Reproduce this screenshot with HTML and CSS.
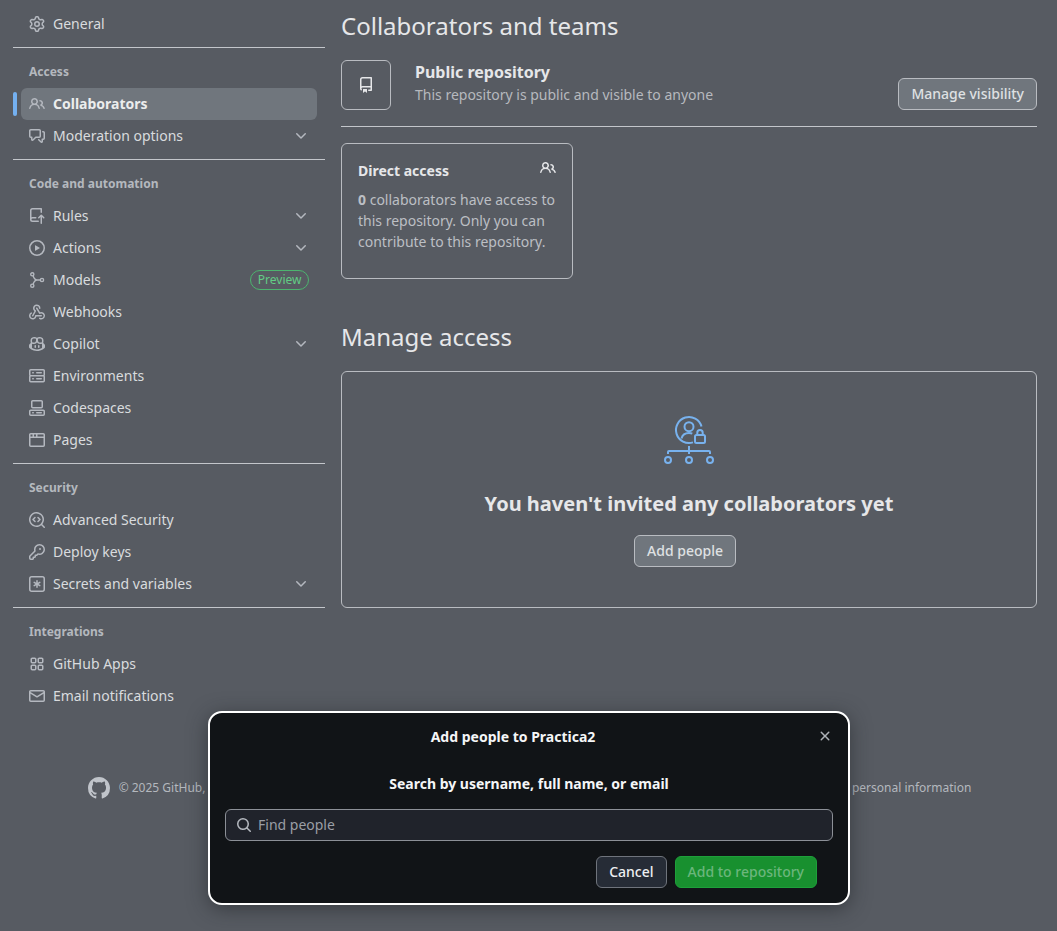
FILE: index.html
```html
<!DOCTYPE html>
<html lang="en">
<head>
<meta charset="utf-8">
<title>Collaborators and teams</title>
<link rel="stylesheet" href="styles.css">
</head>
<body>
<svg class="sprite" xmlns="http://www.w3.org/2000/svg">
<symbol id="gear" viewBox="0 0 16 16"><path d="M8 0a8.2 8.2 0 0 1 .701.031C9.444.095 9.99.645 10.16 1.29l.288 1.107c.018.066.079.158.212.224.231.114.454.243.668.386.123.082.233.09.299.071l1.103-.303c.644-.176 1.392.021 1.82.63.27.385.506.792.704 1.218.315.675.111 1.422-.364 1.891l-.814.806c-.049.048-.098.147-.088.294.016.257.016.515 0 .772-.01.147.038.246.088.294l.814.806c.475.469.679 1.216.364 1.891a7.977 7.977 0 0 1-.704 1.217c-.428.61-1.176.807-1.82.63l-1.102-.302c-.067-.019-.177-.011-.3.071a5.909 5.909 0 0 1-.668.386c-.133.066-.194.158-.211.224l-.29 1.106c-.168.646-.715 1.196-1.458 1.26a8.006 8.006 0 0 1-1.402 0c-.743-.064-1.289-.614-1.458-1.26l-.289-1.106c-.018-.066-.079-.158-.212-.224a5.738 5.738 0 0 1-.668-.386c-.123-.082-.233-.09-.299-.071l-1.103.303c-.644.176-1.392-.021-1.82-.63a8.12 8.12 0 0 1-.704-1.218c-.315-.675-.111-1.422.363-1.891l.815-.806c.05-.048.098-.147.088-.294a6.214 6.214 0 0 1 0-.772c.01-.147-.038-.246-.088-.294l-.815-.806C.635 6.045.431 5.298.746 4.623a7.92 7.92 0 0 1 .704-1.217c.428-.61 1.176-.807 1.82-.63l1.102.302c.067.019.177.011.3-.071.214-.143.437-.272.668-.386.133-.066.194-.158.211-.224l.29-1.106C6.009.645 6.556.095 7.299.03 7.53.01 7.764 0 8 0Zm-.571 1.525c-.036.003-.108.036-.137.146l-.289 1.105c-.147.561-.549.967-.998 1.189-.173.086-.34.183-.5.29-.417.278-.97.423-1.529.27l-1.103-.303c-.109-.03-.175.016-.195.045-.22.312-.412.644-.573.99-.014.031-.021.11.059.19l.815.806c.411.406.562.957.53 1.456a4.709 4.709 0 0 0 0 .582c.032.499-.119 1.05-.53 1.456l-.815.806c-.081.08-.073.159-.059.19.162.346.353.677.573.989.02.03.085.076.195.046l1.102-.303c.56-.153 1.113-.008 1.53.27.161.107.328.204.501.29.447.222.85.629.997 1.189l.289 1.105c.029.109.101.143.137.146a6.6 6.6 0 0 0 1.142 0c.036-.003.108-.036.137-.146l.289-1.105c.147-.561.549-.967.998-1.189.173-.086.34-.183.5-.29.417-.278.97-.423 1.529-.27l1.103.303c.109.029.175-.016.195-.045.22-.313.411-.644.573-.99.014-.031.021-.11-.059-.19l-.815-.806c-.411-.406-.562-.957-.53-1.456a4.709 4.709 0 0 0 0-.582c-.032-.499.119-1.05.53-1.456l.815-.806c.081-.08.073-.159.059-.19a6.464 6.464 0 0 0-.573-.989c-.02-.03-.085-.076-.195-.046l-1.102.303c-.56.153-1.113.008-1.53-.27a4.44 4.44 0 0 0-.501-.29c-.447-.222-.85-.629-.997-1.189l-.289-1.105c-.029-.11-.101-.143-.137-.146a6.6 6.6 0 0 0-1.142 0ZM11 8a3 3 0 1 1-6 0 3 3 0 0 1 6 0ZM9.5 8a1.5 1.5 0 1 0-3.001.001A1.5 1.5 0 0 0 9.5 8Z"/></symbol>
<symbol id="people" viewBox="0 0 16 16"><path d="M2 5.5a3.5 3.5 0 1 1 5.898 2.549 5.508 5.508 0 0 1 3.034 4.084.75.75 0 1 1-1.482.235 4 4 0 0 0-7.9 0 .75.75 0 0 1-1.482-.236A5.507 5.507 0 0 1 3.102 8.05 3.493 3.493 0 0 1 2 5.5ZM11 4a3.001 3.001 0 0 1 2.22 5.018 5.01 5.01 0 0 1 2.56 3.012.749.749 0 0 1-.885.954.752.752 0 0 1-.549-.514 3.507 3.507 0 0 0-2.522-2.372.75.75 0 0 1-.574-.73v-.352a.75.75 0 0 1 .416-.672A1.5 1.5 0 0 0 11 5.5.75.75 0 0 1 11 4Zm-5.5-.5a2 2 0 1 0-.001 3.999A2 2 0 0 0 5.5 3.5Z"/></symbol>
<symbol id="comment" viewBox="0 0 16 16"><path d="M1.75 1h8.5c.966 0 1.75.784 1.75 1.75v5.5A1.75 1.75 0 0 1 10.25 10H7.061l-2.574 2.573A1.458 1.458 0 0 1 2 11.543V10h-.25A1.75 1.75 0 0 1 0 8.25v-5.5C0 1.784.784 1 1.75 1ZM1.5 2.75v5.5c0 .138.112.25.25.25h1a.75.75 0 0 1 .75.75v2.19l2.72-2.72a.749.749 0 0 1 .53-.22h3.5a.25.25 0 0 0 .25-.25v-5.5a.25.25 0 0 0-.25-.25h-8.5a.25.25 0 0 0-.25.25Zm13 2a.25.25 0 0 0-.25-.25h-.5a.75.75 0 0 1 0-1.5h.5c.966 0 1.75.784 1.75 1.75v5.5A1.75 1.75 0 0 1 14.25 12H14v1.543a1.458 1.458 0 0 1-2.487 1.03L9.22 12.28a.749.749 0 0 1 .326-1.275.749.749 0 0 1 .734.215l2.22 2.22v-2.19a.75.75 0 0 1 .75-.75h1a.25.25 0 0 0 .25-.25Z"/></symbol>
<symbol id="repopush" viewBox="0 0 16 16"><path d="M1 2.5A2.5 2.5 0 0 1 3.5 0h8.75a.75.75 0 0 1 .75.75v3.5a.75.75 0 0 1-1.5 0V1.5h-8a1 1 0 0 0-1 1v6.708A2.493 2.493 0 0 1 3.5 9h3.25a.75.75 0 0 1 0 1.5H3.5a1 1 0 0 0 0 2h5.75a.75.75 0 0 1 0 1.5H3.5A2.5 2.5 0 0 1 1 11.5Zm13.23 7.79h-.001l-1.224-1.224v6.184a.75.75 0 0 1-1.5 0V9.066L10.28 10.29a.75.75 0 0 1-1.06-1.061l2.505-2.504a.75.75 0 0 1 1.06 0L15.29 9.23a.751.751 0 0 1-.018 1.042.751.751 0 0 1-1.042.018Z"/></symbol>
<symbol id="play" viewBox="0 0 16 16"><path d="M8 0a8 8 0 1 1 0 16A8 8 0 0 1 8 0ZM1.5 8a6.5 6.5 0 1 0 13 0 6.5 6.5 0 0 0-13 0Zm4.879-2.773 4.264 2.559a.25.25 0 0 1 0 .428l-4.264 2.559A.25.25 0 0 1 6 10.559V5.442a.25.25 0 0 1 .379-.215Z"/></symbol>
<symbol id="model" viewBox="0 0 16 16"><g fill="none" stroke="currentColor" stroke-width="1.4"><circle cx="3.3" cy="2.3" r="1.6"/><circle cx="3.3" cy="13.7" r="1.6"/><circle cx="13" cy="8" r="1.6"/><path d="M11.4 8H8C6.400 8 5 6.500 4.100 3.800M8 8C6.400 8 5 9.500 4.100 12.200"/></g></symbol>
<symbol id="webhook" viewBox="0 0 16 16"><path d="M5.5 4.25a2.25 2.25 0 0 1 4.5 0 .75.75 0 0 0 1.5 0 3.75 3.75 0 1 0-6.14 2.889l-2.272 4.258a.75.75 0 0 0 1.324.706L7 7.25a.75.75 0 0 0-.309-1.016A2.25 2.25 0 0 1 5.5 4.25Z"/><path d="M7.364 3.607a.75.75 0 0 1 1.03.257l2.608 4.349a3.75 3.75 0 1 1-.628 6.785.75.75 0 0 1 .752-1.299 2.25 2.25 0 1 0-.033-3.88.75.75 0 0 1-1.03-.256L7.107 4.636a.75.75 0 0 1 .257-1.03Z"/><path d="M2.9 8.776A.75.75 0 0 1 2.625 9.8 2.25 2.25 0 1 0 6 11.75a.75.75 0 0 1 .75-.751h5.5a.75.75 0 0 1 0 1.5H7.425a3.751 3.751 0 1 1-5.55-3.998.75.75 0 0 1 1.024.274Z"/></symbol>
<symbol id="copilot" viewBox="0 0 16 16"><path d="M7.998 15.035c-4.562 0-7.873-2.914-7.998-3.749V9.338c.085-.628.677-1.686 1.588-2.065.013-.07.024-.143.036-.218.029-.183.06-.384.126-.612-.201-.508-.254-1.084-.254-1.656 0-.87.128-1.769.693-2.484.579-.733 1.494-1.124 2.724-1.261 1.206-.134 2.262.034 2.944.765.05.053.096.108.139.165.044-.057.094-.112.143-.165.682-.731 1.738-.899 2.944-.765 1.23.137 2.145.528 2.724 1.261.566.715.693 1.614.693 2.484 0 .572-.053 1.148-.254 1.656.066.228.098.429.126.612.012.076.024.148.037.218.924.385 1.522 1.471 1.591 2.095v1.872c0 .766-3.351 3.795-8.002 3.795Zm0-1.485c2.28 0 4.584-1.11 5.002-1.433V7.862l-.023-.116c-.49.21-1.075.291-1.727.291-1.146 0-2.059-.327-2.71-.991A3.222 3.222 0 0 1 8 6.303a3.24 3.24 0 0 1-.544.743c-.65.664-1.563.991-2.71.991-.652 0-1.236-.081-1.727-.291l-.023.116v4.255c.419.323 2.722 1.433 5.002 1.433ZM6.762 2.83c-.193-.206-.637-.413-1.682-.297-1.019.113-1.479.404-1.713.7-.247.312-.369.789-.369 1.554 0 .793.129 1.171.308 1.371.162.181.519.379 1.442.379.853 0 1.339-.235 1.638-.54.315-.322.527-.827.617-1.553.117-.935-.037-1.395-.241-1.614Zm4.155-.297c-1.044-.116-1.488.091-1.681.297-.204.219-.359.679-.242 1.614.091.726.303 1.231.618 1.553.299.305.784.54 1.638.54.922 0 1.28-.198 1.442-.379.179-.2.308-.578.308-1.371 0-.765-.123-1.242-.37-1.554-.233-.296-.693-.587-1.713-.7Z"/><path d="M6.25 9.037a.75.75 0 0 1 .75.75v1.501a.75.75 0 0 1-1.5 0V9.787a.75.75 0 0 1 .75-.75Zm4.25.75v1.501a.75.75 0 0 1-1.5 0V9.787a.75.75 0 0 1 1.5 0Z"/></symbol>
<symbol id="server" viewBox="0 0 16 16"><path d="M1.75 1h12.5c.966 0 1.75.784 1.75 1.75v4c0 .372-.116.717-.314 1 .198.283.314.628.314 1v4a1.75 1.75 0 0 1-1.75 1.75H1.75A1.75 1.75 0 0 1 0 12.75v-4c0-.358.109-.707.314-1a1.739 1.739 0 0 1-.314-1v-4C0 1.784.784 1 1.75 1ZM1.5 2.75v4c0 .138.112.25.25.25h12.5a.25.25 0 0 0 .25-.25v-4a.25.25 0 0 0-.25-.25H1.75a.25.25 0 0 0-.25.25Zm.25 5.75a.25.25 0 0 0-.25.25v4c0 .138.112.25.25.25h12.5a.25.25 0 0 0 .25-.25v-4a.25.25 0 0 0-.25-.25ZM7 4.75A.75.75 0 0 1 7.75 4h4.5a.75.75 0 0 1 0 1.5h-4.5A.75.75 0 0 1 7 4.75ZM7.75 10h4.5a.75.75 0 0 1 0 1.5h-4.5a.75.75 0 0 1 0-1.5ZM3 4.75A.75.75 0 0 1 3.75 4h.5a.75.75 0 0 1 0 1.5h-.5A.75.75 0 0 1 3 4.75ZM3.75 10h.5a.75.75 0 0 1 0 1.5h-.5a.75.75 0 0 1 0-1.5Z"/></symbol>
<symbol id="codespaces" viewBox="0 0 16 16"><path d="M0 11.25c0-.966.784-1.75 1.75-1.75h12.5c.966 0 1.75.784 1.75 1.75v3A1.75 1.75 0 0 1 14.25 16H1.75A1.75 1.75 0 0 1 0 14.25Zm2-9.5C2 .784 2.784 0 3.75 0h8.5C13.216 0 14 .784 14 1.75v5a1.75 1.75 0 0 1-1.75 1.75h-8.5A1.75 1.75 0 0 1 2 6.75Zm1.75-.25a.25.25 0 0 0-.25.25v5c0 .138.112.25.25.25h8.5a.25.25 0 0 0 .25-.25v-5a.25.25 0 0 0-.25-.25Zm-2 9.5a.25.25 0 0 0-.25.25v3c0 .138.112.25.25.25h12.5a.25.25 0 0 0 .25-.25v-3a.25.25 0 0 0-.25-.25Z"/><path d="M7 12.75a.75.75 0 0 1 .75-.75h4.5a.75.75 0 0 1 0 1.5h-4.5a.75.75 0 0 1-.75-.75Zm-4 0a.75.75 0 0 1 .75-.75h.5a.75.75 0 0 1 0 1.5h-.5a.75.75 0 0 1-.75-.75Z"/></symbol>
<symbol id="browser" viewBox="0 0 16 16"><path d="M0 2.75C0 1.784.784 1 1.75 1h12.5c.966 0 1.75.784 1.75 1.75v10.5A1.75 1.75 0 0 1 14.25 15H1.75A1.75 1.75 0 0 1 0 13.25ZM14.5 6h-13v7.25c0 .138.112.25.25.25h12.5a.25.25 0 0 0 .25-.25Zm-6-3.5v2h6V2.75a.25.25 0 0 0-.25-.25ZM5 2.5v2h2v-2Zm-3.25 0a.25.25 0 0 0-.25.25V4.5h2v-2Z"/></symbol>
<symbol id="codescan" viewBox="0 0 16 16"><path d="M8.47 4.97a.75.75 0 0 0 0 1.06L9.94 7.5 8.47 8.97a.75.75 0 1 0 1.06 1.06l2-2a.75.75 0 0 0 0-1.06l-2-2a.75.75 0 0 0-1.06 0ZM6.53 6.03a.75.75 0 0 0-1.06-1.06l-2 2a.75.75 0 0 0 0 1.06l2 2a.75.75 0 1 0 1.06-1.06L5.06 7.5l1.47-1.47Z"/><path d="M12.246 13.307a7.501 7.501 0 1 1 1.06-1.06l2.474 2.473a.749.749 0 0 1-.326 1.275.749.749 0 0 1-.734-.215ZM1.5 7.5a6.002 6.002 0 0 0 3.608 5.504 6.002 6.002 0 0 0 6.486-1.117.748.748 0 0 1 .292-.293A6 6 0 1 0 1.5 7.5Z"/></symbol>
<symbol id="key" viewBox="0 0 16 16"><path d="M10.5 0a5.499 5.499 0 1 1-1.288 10.848l-.932.932a.749.749 0 0 1-.53.22H7v.75a.749.749 0 0 1-.22.53l-.5.5a.749.749 0 0 1-.53.22H5v.75a.749.749 0 0 1-.22.53l-.5.5a.749.749 0 0 1-.53.22h-2A1.75 1.75 0 0 1 0 14.25v-2c0-.199.079-.389.22-.53l4.932-4.932A5.5 5.5 0 0 1 10.5 0Zm-4 5.5c-.001.431.069.86.205 1.269a.75.75 0 0 1-.181.768L1.5 12.56v1.69c0 .138.112.25.25.25h1.69l.06-.06v-1.19a.75.75 0 0 1 .75-.75h1.19l.06-.06v-1.19a.75.75 0 0 1 .75-.75h1.19l1.023-1.025a.75.75 0 0 1 .768-.18A4 4 0 1 0 6.5 5.5ZM11 6a1 1 0 1 1 0-2 1 1 0 0 1 0 2Z"/></symbol>
<symbol id="asterisk" viewBox="0 0 16 16"><path d="M0 2.75A2.75 2.75 0 0 1 2.75 0h10.5A2.75 2.75 0 0 1 16 2.75v10.5A2.75 2.75 0 0 1 13.25 16H2.75A2.75 2.75 0 0 1 0 13.25ZM2.75 1.5c-.69 0-1.25.56-1.25 1.25v10.5c0 .69.56 1.25 1.25 1.25h10.5c.69 0 1.25-.56 1.25-1.25V2.75c0-.69-.56-1.25-1.25-1.25Z"/><path d="M8 4a.75.75 0 0 1 .75.75V6.7l1.69-.975a.75.75 0 0 1 .75 1.3L9.5 8l1.69.976a.75.75 0 0 1-.75 1.298L8.75 9.3v1.951a.75.75 0 0 1-1.5 0V9.299l-1.69.976a.75.75 0 0 1-.75-1.3L6.5 8l-1.69-.975a.75.75 0 0 1 .75-1.3l1.69.976V4.75A.75.75 0 0 1 8 4Z"/></symbol>
<symbol id="apps" viewBox="0 0 16 16"><path d="M1.5 3.25c0-.966.784-1.75 1.75-1.75h2.5c.966 0 1.75.784 1.75 1.75v2.5A1.75 1.75 0 0 1 5.75 7.5h-2.5A1.75 1.75 0 0 1 1.5 5.75Zm7 0c0-.966.784-1.75 1.75-1.75h2.5c.966 0 1.75.784 1.75 1.75v2.5a1.75 1.75 0 0 1-1.75 1.75h-2.5A1.75 1.75 0 0 1 8.5 5.75Zm-7 7c0-.966.784-1.75 1.75-1.75h2.5c.966 0 1.75.784 1.75 1.75v2.5a1.75 1.75 0 0 1-1.75 1.75h-2.5a1.75 1.75 0 0 1-1.75-1.75Zm7 0c0-.966.784-1.75 1.75-1.75h2.5c.966 0 1.75.784 1.75 1.75v2.5a1.75 1.75 0 0 1-1.75 1.75h-2.5a1.75 1.75 0 0 1-1.75-1.75ZM3.25 3a.25.25 0 0 0-.25.25v2.5c0 .138.112.25.25.25h2.5A.25.25 0 0 0 6 5.75v-2.5A.25.25 0 0 0 5.75 3Zm7 0a.25.25 0 0 0-.25.25v2.5c0 .138.112.25.25.25h2.5a.25.25 0 0 0 .25-.25v-2.5a.25.25 0 0 0-.25-.25Zm-7 7a.25.25 0 0 0-.25.25v2.5c0 .138.112.25.25.25h2.5a.25.25 0 0 0 .25-.25v-2.5a.25.25 0 0 0-.25-.25Zm7 0a.25.25 0 0 0-.25.25v2.5c0 .138.112.25.25.25h2.5a.25.25 0 0 0 .25-.25v-2.5a.25.25 0 0 0-.25-.25Z"/></symbol>
<symbol id="mail" viewBox="0 0 16 16"><path d="M1.75 2h12.5c.966 0 1.75.784 1.75 1.75v8.5A1.75 1.75 0 0 1 14.25 14H1.75A1.75 1.75 0 0 1 0 12.25v-8.5C0 2.784.784 2 1.75 2ZM1.5 12.251c0 .138.112.25.25.25h12.5a.25.25 0 0 0 .25-.25V5.809L8.38 9.397a.75.75 0 0 1-.76 0L1.5 5.809v6.442Zm13-8.181v-.32a.25.25 0 0 0-.25-.25H1.75a.25.25 0 0 0-.25.25v.32L8 7.88Z"/></symbol>
<symbol id="chevron" viewBox="0 0 16 16"><path d="M12.78 5.22a.749.749 0 0 1 0 1.06l-4.25 4.25a.749.749 0 0 1-1.06 0L3.22 6.28a.749.749 0 1 1 1.06-1.06L8 8.939l3.72-3.719a.749.749 0 0 1 1.06 0Z"/></symbol>
<symbol id="repo" viewBox="0 0 16 16"><path d="M2 2.5A2.5 2.5 0 0 1 4.5 0h8.75a.75.75 0 0 1 .75.75v12.5a.75.75 0 0 1-.75.75h-2.5a.75.75 0 0 1 0-1.5h1.75v-2h-8a1 1 0 0 0-.714 1.7.75.75 0 1 1-1.072 1.05A2.495 2.495 0 0 1 2 11.5Zm10.5-1h-8a1 1 0 0 0-1 1v6.708A2.486 2.486 0 0 1 4.5 9h8ZM5 12.25a.25.25 0 0 1 .25-.25h3.5a.25.25 0 0 1 .25.25v3.25a.25.25 0 0 1-.4.2l-1.45-1.087a.249.249 0 0 0-.3 0L5.4 15.7a.25.25 0 0 1-.4-.2Z"/></symbol>
<symbol id="close" viewBox="0 0 16 16"><path d="M3.72 3.72a.75.75 0 0 1 1.06 0L8 6.94l3.22-3.22a.749.749 0 0 1 1.275.326.749.749 0 0 1-.215.734L9.06 8l3.22 3.22a.749.749 0 0 1-.326 1.275.749.749 0 0 1-.734-.215L8 9.06l-3.22 3.22a.751.751 0 0 1-1.042-.018.751.751 0 0 1-.018-1.042L6.94 8 3.72 4.78a.75.75 0 0 1 0-1.06Z"/></symbol>
<symbol id="search" viewBox="0 0 16 16"><path d="M10.68 11.74a6 6 0 0 1-7.922-8.982 6 6 0 0 1 8.982 7.922l3.04 3.04a.749.749 0 0 1-.326 1.275.749.749 0 0 1-.734-.215ZM11.5 7a4.499 4.499 0 1 0-8.997 0A4.499 4.499 0 0 0 11.5 7Z"/></symbol>
<symbol id="github" viewBox="0 0 16 16"><path d="M8 0c4.42 0 8 3.58 8 8a8.013 8.013 0 0 1-5.45 7.59c-.4.08-.55-.17-.55-.38 0-.27.01-1.13.01-2.2 0-.75-.25-1.23-.54-1.48 1.78-.2 3.65-.88 3.65-3.95 0-.88-.31-1.59-.82-2.15.08-.2.36-1.02-.08-2.12 0 0-.67-.22-2.2.82-.64-.18-1.32-.27-2-.27-.68 0-1.36.09-2 .27-1.53-1.03-2.2-.82-2.2-.82-.44 1.1-.16 1.92-.08 2.12-.51.56-.82 1.28-.82 2.15 0 3.06 1.86 3.75 3.64 3.95-.23.2-.44.55-.51 1.07-.46.21-1.61.55-2.33-.66-.15-.24-.6-.83-1.23-.82-.67.01-.27.38.01.53.34.19.73.9.82 1.13.16.45.68 1.31 2.69.94 0 .67.01 1.3.01 1.49 0 .21-.15.45-.55.38A7.995 7.995 0 0 1 0 8c0-4.42 3.58-8 8-8Z"/></symbol>
</svg>

<div class="page">
  <nav class="sidebar">
    <ul class="group">
      <li class="row"><svg class="ico"><use href="#gear"/></svg><span class="row-label">General</span></li>
    </ul>
    <h3 class="group-title">Access</h3>
    <ul class="group">
      <li class="row row-active"><svg class="ico"><use href="#people"/></svg><span class="row-label">Collaborators</span></li>
      <li class="row"><svg class="ico"><use href="#comment"/></svg><span class="row-label">Moderation options</span><svg class="ico"><use href="#chevron"/></svg></li>
    </ul>
    <h3 class="group-title">Code and automation</h3>
    <ul class="group">
      <li class="row"><svg class="ico"><use href="#repopush"/></svg><span class="row-label">Rules</span><svg class="ico"><use href="#chevron"/></svg></li>
      <li class="row"><svg class="ico"><use href="#play"/></svg><span class="row-label">Actions</span><svg class="ico"><use href="#chevron"/></svg></li>
      <li class="row"><svg class="ico"><use href="#model"/></svg><span class="row-label">Models</span><span class="pill">Preview</span></li>
      <li class="row"><svg class="ico"><use href="#webhook"/></svg><span class="row-label">Webhooks</span></li>
      <li class="row"><svg class="ico"><use href="#copilot"/></svg><span class="row-label">Copilot</span><svg class="ico"><use href="#chevron"/></svg></li>
      <li class="row"><svg class="ico"><use href="#server"/></svg><span class="row-label">Environments</span></li>
      <li class="row"><svg class="ico"><use href="#codespaces"/></svg><span class="row-label">Codespaces</span></li>
      <li class="row"><svg class="ico"><use href="#browser"/></svg><span class="row-label">Pages</span></li>
    </ul>
    <h3 class="group-title">Security</h3>
    <ul class="group">
      <li class="row"><svg class="ico"><use href="#codescan"/></svg><span class="row-label">Advanced Security</span></li>
      <li class="row"><svg class="ico"><use href="#key"/></svg><span class="row-label">Deploy keys</span></li>
      <li class="row"><svg class="ico"><use href="#asterisk"/></svg><span class="row-label">Secrets and variables</span><svg class="ico"><use href="#chevron"/></svg></li>
    </ul>
    <h3 class="group-title">Integrations</h3>
    <ul class="group">
      <li class="row"><svg class="ico"><use href="#apps"/></svg><span class="row-label">GitHub Apps</span></li>
      <li class="row"><svg class="ico"><use href="#mail"/></svg><span class="row-label">Email notifications</span></li>
    </ul>
  </nav>

  <main class="content">
    <h2 class="heading">Collaborators and teams</h2>
    <section class="visibility">
      <div class="repo-box"><svg class="ico ico-light"><use href="#repo"/></svg></div>
      <div class="visibility-text">
        <div class="visibility-title">Public repository</div>
        <div class="visibility-sub">This repository is public and visible to anyone</div>
      </div>
      <button class="btn btn-outline">Manage visibility</button>
    </section>
    <section class="access-card">
      <div class="access-head">
        <span class="access-title">Direct access</span>
        <svg class="ico ico-light"><use href="#people"/></svg>
      </div>
      <p class="access-body"><strong>0</strong> collaborators have access to this repository. Only you can contribute to this repository.</p>
    </section>
    <h2 class="heading heading-second">Manage access</h2>
    <section class="empty">
      <svg class="illus" viewBox="661 412 56 56" fill="none" stroke="#78b2ee" stroke-width="2">
        <path d="M693 442.4A13 13 0 1 1 701.500 426.500"/>
        <circle cx="689" cy="426.700" r="4.500"/>
        <path d="M681.500 438.500c.8-3.500 3.800-5.500 7.500-5.500 1.200 0 2.300.2 3.300.7"/>
        <rect x="695" y="435" width="10" height="8" rx="1.500"/>
        <path d="M697.300 435v-2.200a2.700 2.700 0 0 1 5.400 0v2.200"/>
        <path d="M668 454v-2a1 1 0 0 1 1-1h40a1 1 0 0 1 1 1v2M689 446v8"/>
        <circle cx="668" cy="460" r="3"/><circle cx="689" cy="460" r="3"/><circle cx="710" cy="460" r="3"/>
      </svg>
      <h3 class="empty-title">You haven't invited any collaborators yet</h3>
      <button class="btn btn-filled btn-shift">Add people</button>
    </section>
  </main>
</div>

<footer class="footer">
  <svg class="footer-logo"><use href="#github"/></svg>
  <span>© 2025 GitHub, Inc.</span>
  <span>Terms</span><span>Privacy</span><span>Security</span><span>Status</span><span>Community</span><span>Docs</span><span>Contact</span><span>Manage cookies</span><span>Do not share my personal information</span>
</footer>

<div class="dialog" role="dialog">
  <div class="dialog-title">Add people to Practica2</div>
  <svg class="ico dialog-close"><use href="#close"/></svg>
  <label class="dialog-label" for="find">Search by username, full name, or email</label>
  <div class="field">
    <svg class="ico"><use href="#search"/></svg>
    <input class="field-input" id="find" placeholder="Find people">
  </div>
  <div class="dialog-actions">
    <button class="btn btn-cancel">Cancel</button>
    <button class="btn btn-add">Add to repository</button>
  </div>
</div>
</body>
</html>
```

FILE: styles.css
```css
* { box-sizing: border-box; }
html, body { margin: 0; padding: 0; }
body {
  height: 931px;
  overflow: hidden;
  background: #575b62;
  color: #d9dbde;
  font-family: "Noto Sans", sans-serif;
  font-size: 14px;
  line-height: 21px;
  position: relative;
}
.sprite { display: none; }
.ico { width: 16px; height: 16px; fill: currentColor; flex: none; color: #b4b8bf; }
.ico-light { color: #e6e7e9; }

.page { display: flex; gap: 16px; padding-left: 13px; }
.sidebar { width: 312px; padding-top: 8px; flex: none; }
.group { list-style: none; margin: 0; padding: 0 8px; }
.group-title {
  margin: 7px 0 0;
  height: 41px;
  padding: 14px 16px 0;
  border-top: 1px solid #c3c6cb;
  font-size: 12px;
  line-height: 20px;
  font-weight: 700;
  color: #b4b8be;
}
.row {
  height: 32px;
  padding: 0 8px;
  display: flex;
  align-items: center;
  gap: 8px;
  border-radius: 6px;
  position: relative;
  color: #d9dbde;
}
.row-label { flex: 1; line-height: 20px; }
.row-active { background: #70767d; color: #eceded; font-weight: 700; }
.row-active::before {
  content: "";
  position: absolute;
  left: -8px;
  top: 4px;
  width: 4px;
  height: 24px;
  border-radius: 2px;
  background: #74b0f0;
}
.pill {
  height: 20px;
  padding: 0 6.5px;
  border: 1px solid #4cb56f;
  border-radius: 10px;
  font-size: 12px;
  line-height: 18px;
  color: #63cc85;
}

.content { width: 696px; padding-top: 8px; }
.heading { margin: 0 0 16px; font-size: 24px; line-height: 36px; font-weight: 400; color: #e6e7e9; }
.heading-second { margin-top: 40px; }
.visibility {
  display: flex;
  align-items: flex-end;
  gap: 24px;
  padding-bottom: 16px;
  border-bottom: 1px solid #c3c6cb;
  margin-bottom: 16px;
}
.repo-box {
  width: 50px;
  height: 50px;
  border: 1px solid #b9bcc1;
  border-radius: 6px;
  display: flex;
  align-items: center;
  justify-content: center;
}
.visibility-text { flex: 1; align-self: flex-start; }
.visibility-title { font-size: 16px; line-height: 24px; font-weight: 700; color: #e6e7e9; }
.visibility-sub { font-size: 14px; line-height: 22px; color: #b6b9be; }
.btn {
  height: 32px;
  padding: 0 12px;
  border-radius: 6px;
  font-family: inherit;
  font-size: 14px;
  font-weight: 500;
  line-height: 20px;
  flex: none;
}
.btn-outline, .btn-filled { background: #70767d; border: 1px solid #b9bcc1; color: #dfe1e3; }
.btn-shift { margin-right: 8px; }

.access-card {
  width: 232px;
  height: 136px;
  padding: 16px;
  border: 1px solid #b9bcc1;
  border-radius: 6px;
}
.access-head { display: flex; justify-content: space-between; align-items: flex-start; margin-bottom: 8px; }
.access-title { font-weight: 700; color: #e6e7e9; }
.access-body { margin: 0; color: #bcbfc4; }
.access-body strong { font-weight: 700; }

.empty {
  height: 237px;
  padding-top: 40px;
  border: 1px solid #b9bcc1;
  border-radius: 6px;
  display: flex;
  flex-direction: column;
  align-items: center;
}
.illus { width: 56px; height: 56px; flex: none; }
.empty-title { margin: 21px 0 16px; font-size: 20px; line-height: 30px; font-weight: 700; color: #e6e7e9; }

.footer {
  margin-top: 65px;
  padding-left: 2px;
  display: flex;
  justify-content: center;
  align-items: center;
  gap: 16px;
  font-size: 12px;
  line-height: 22px;
  color: #b4b8be;
}
.footer-logo { width: 22px; height: 22px; fill: #c0c4ca; margin-right: -7px; flex: none; }

.dialog {
  position: absolute;
  left: 208px;
  top: 711px;
  width: 642px;
  height: 194px;
  padding: 0 15px;
  background: #111417;
  border: 2px solid #ffffff;
  border-radius: 14px;
  box-shadow: 0 4px 20px rgba(30, 32, 36, .55);
  display: flex;
  flex-direction: column;
  color: #f5f6f7;
}
.dialog-title { margin-top: 13px; font-weight: 700; line-height: 21px; text-align: center; padding-right: 32px; color: #f5f6f7; }
.dialog-close { position: absolute; right: 15px; top: 15px; color: #aeb2b8; }
.dialog-label { margin-top: 26px; font-weight: 700; text-align: center; }
.field {
  margin-top: 15px;
  height: 32px;
  padding: 0 10px;
  display: flex;
  align-items: center;
  gap: 6px;
  background: #20232b;
  border: 1px solid #8c9097;
  border-radius: 6px;
}
.field-input {
  flex: 1;
  border: 0;
  outline: 0;
  padding: 0;
  background: transparent;
  color: #f5f6f7;
  font-family: inherit;
  font-size: 14px;
  line-height: 20px;
}
.field-input::placeholder { color: #9a9ea5; opacity: 1; }
.dialog-actions { margin-top: 15px; padding-right: 16px; display: flex; justify-content: flex-end; gap: 8px; }
.btn-cancel { background: #262c36; border: 1px solid #6f747c; color: #eef0f2; }
.btn-add { background: #18902f; border: 1px solid #1ea03a; color: #6bb67c; }
```
